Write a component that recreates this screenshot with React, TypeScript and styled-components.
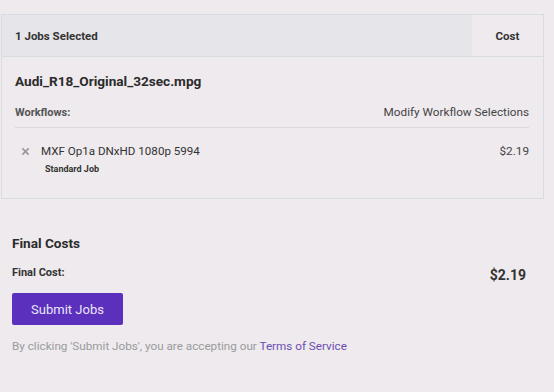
import styled, { createGlobalStyle } from "styled-components";

const GlobalStyle = createGlobalStyle`
	body {
		margin: 0;
		background: #eeeaee;
		font-family: Roboto, "Liberation Sans", sans-serif;
		color: #333;
	}
`;

const jobs = [
	{
		file: "Audi_R18_Original_32sec.mpg",
		workflows: [{ name: "MXF Op1a DNxHD 1080p 5994", type: "Standard Job", cost: "$2.19" }],
	},
];

const App = () => {
	return (
		<Page>
			<GlobalStyle />
			<Card>
				<CardHeader>
					<HeaderTitle>1 Jobs Selected</HeaderTitle>
					<HeaderCost>Cost</HeaderCost>
				</CardHeader>

				{jobs.map((job) => (
					<CardBody key={job.file}>
						<FileName>{job.file}</FileName>
						<WorkflowBar>
							<WorkflowLabel>Workflows:</WorkflowLabel>
							<ModifyLink>Modify Workflow Selections</ModifyLink>
						</WorkflowBar>

						{job.workflows.map((wf) => (
							<WorkflowRow key={wf.name}>
								<RemoveIcon viewBox="0 0 10 10">
									<path d="M1.5 1.5 L8.5 8.5 M8.5 1.5 L1.5 8.5" />
								</RemoveIcon>
								<WorkflowInfo>
									<WorkflowName>{wf.name}</WorkflowName>
									<JobType>{wf.type}</JobType>
								</WorkflowInfo>
								<RowCost>{wf.cost}</RowCost>
							</WorkflowRow>
						))}
					</CardBody>
				))}
			</Card>

			<Summary>
				<SummaryTitle>Final Costs</SummaryTitle>
				<TotalRow>
					<TotalLabel>Final Cost:</TotalLabel>
					<TotalValue>$2.19</TotalValue>
				</TotalRow>
				<SubmitButton>Submit Jobs</SubmitButton>
				<Disclaimer>
					By clicking 'Submit Jobs', you are accepting our <a>Terms of Service</a>
				</Disclaimer>
			</Summary>
		</Page>
	);
};

const Page = styled.div`
	width: 554px;
	height: 392px;
	padding-top: 14px;
	box-sizing: border-box;
`;

const Card = styled.div`
	margin-left: 1px;
	width: 543px;
	box-sizing: border-box;
	border: 1px solid #d8dbe2;
	background: #eeeaee;
`;

const CardHeader = styled.div`
	display: flex;
	height: 41px;
	border-bottom: 1px solid #d8dbe2;
	font-size: 11.5px;
	font-weight: 700;
	color: #333;
`;

const HeaderTitle = styled.div`
	flex: 1;
	display: flex;
	align-items: center;
	padding-left: 13px;
	background: #e6e5e9;
`;

const HeaderCost = styled.div`
	width: 71px;
	display: flex;
	align-items: center;
	justify-content: center;
	box-sizing: border-box;
`;

const CardBody = styled.div`
	padding: 14px 14px 24px 13px;
`;

const FileName = styled.div`
	font-size: 13.6px;
	font-weight: 700;
	color: #2b2b2b;
	line-height: 20px;
	margin-bottom: 11px;
`;

const WorkflowBar = styled.div`
	display: flex;
	justify-content: space-between;
	align-items: center;
	height: 20px;
	padding-bottom: 5px;
	border-bottom: 1px solid #d9d9dd;
	margin-bottom: 15px;
`;

const WorkflowLabel = styled.span`
	font-size: 11px;
	font-weight: 700;
	color: #555;
`;

const ModifyLink = styled.span`
	font-size: 11.75px;
	color: #444;
`;

const WorkflowRow = styled.div`
	display: flex;
	align-items: flex-start;
`;

const RemoveIcon = styled.svg`
	width: 9px;
	height: 9px;
	margin: 4px 11px 0 6px;
	stroke: #999;
	stroke-width: 1.8;
	fill: none;
`;

const WorkflowInfo = styled.div`
	flex: 1;
	display: flex;
	flex-direction: column;
`;

const WorkflowName = styled.span`
	font-size: 11.6px;
	color: #333;
	line-height: 16px;
`;

const JobType = styled.span`
	font-size: 9px;
	font-weight: 700;
	color: #333;
	margin-left: 4px;
	margin-top: 5px;
`;

const RowCost = styled.span`
	font-size: 11.75px;
	color: #444;
	line-height: 16px;
`;

const Summary = styled.div`
	width: 526px;
	padding: 35px 0 0 12px;
	box-sizing: border-box;
`;

const SummaryTitle = styled.div`
	font-size: 13.6px;
	font-weight: 700;
	color: #2b2b2b;
	line-height: 18px;
`;

const TotalRow = styled.div`
	display: flex;
	justify-content: space-between;
	align-items: center;
	margin-top: 9px;
`;

const TotalLabel = styled.span`
	font-size: 11px;
	font-weight: 700;
	color: #333;
`;

const TotalValue = styled.span`
	font-size: 14px;
	font-weight: 700;
	color: #333;
	margin-top: 6px;
`;

const SubmitButton = styled.button`
	display: block;
	margin-top: 10px;
	width: 111px;
	height: 32px;
	border: none;
	border-radius: 2px;
	background: #5a30bc;
	color: #ece6fb;
	font-family: Roboto, "Liberation Sans", sans-serif;
	font-size: 13px;
`;

const Disclaimer = styled.p`
	margin: 14px 0 0;
	font-size: 11.7px;
	color: #9b9b9b;

	a {
		color: #6a4fb0;
	}
`;

export default App;
